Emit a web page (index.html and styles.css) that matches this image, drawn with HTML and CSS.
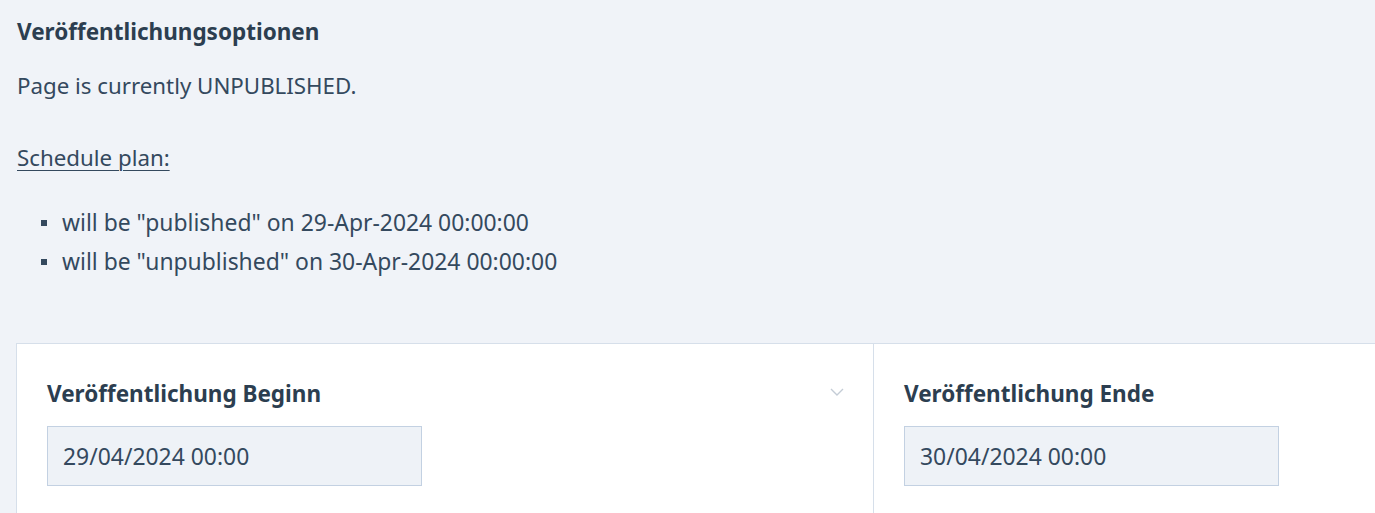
FILE: index.html
```html
<!DOCTYPE html>
<html lang="de">
<head>
<meta charset="utf-8">
<link rel="stylesheet" href="styles.css">
</head>
<body>
<div class="page">
  <h2 class="title">Veröffentlichungsoptionen</h2>
  <p class="status">Page is currently UNPUBLISHED.</p>
  <p class="plan"><u>Schedule plan:</u></p>
  <ul class="schedule">
    <li>will be "published" on 29-Apr-2024 00:00:00</li>
    <li>will be "unpublished" on 30-Apr-2024 00:00:00</li>
  </ul>
  <div class="card">
    <div class="col col-left">
      <div class="field">
        <label class="label">Veröffentlichung Beginn</label>
        <div class="input">29/04/2024 00:00</div>
      </div>
      <svg class="chevron" width="14" height="8" viewBox="0 0 14 8"><path d="M1 1 L7 7 L13 1" fill="none" stroke="#c4ccd6" stroke-width="1.4"/></svg>
    </div>
    <div class="col col-right">
      <div class="field">
        <label class="label">Veröffentlichung Ende</label>
        <div class="input">30/04/2024 00:00</div>
      </div>
    </div>
  </div>
</div>
</body>
</html>
```

FILE: styles.css
```css
html, body {
  margin: 0;
  padding: 0;
  background: #f0f3f8;
  overflow: hidden;
}
body {
  font-family: "Noto Sans", "Open Sans", sans-serif;
  color: #34495e;
}
.page {
  padding: 18px 0 0 16px;
}
.title {
  margin: 0;
  padding-left: 1px;
  font-size: 22.5px;
  font-weight: 700;
  line-height: 28px;
  color: #2c3e50;
}
.status {
  margin: 26px 0 0 1px;
  font-size: 22.3px;
  line-height: 28px;
}
.plan {
  margin: 44px 0 0 1px;
  font-size: 22.3px;
  line-height: 28px;
}
.plan u {
  text-underline-offset: 4px;
  text-decoration-thickness: 1px;
}
.schedule {
  margin: 31px 0 0 0;
  padding-left: 46px;
  list-style: none;
  font-size: 22.9px;
  line-height: 39px;
}
.schedule li {
  position: relative;
}
.schedule li::before {
  content: "";
  position: absolute;
  left: -21px;
  top: 17px;
  width: 6px;
  height: 6px;
  background: #34495e;
}
.card {
  margin-top: 62px;
  display: flex;
  background: #fff;
  border-top: 1px solid #d6dfea;
  border-left: 1px solid #d6dfea;
  height: 200px;
}
.col {
  display: flex;
  align-items: flex-start;
}
.col-left {
  width: 857px;
  border-right: 1px solid #d6dfea;
  padding: 36px 0 0 30px;
  box-sizing: border-box;
  justify-content: space-between;
}
.col-right {
  flex: 1;
  padding: 36px 0 0 30px;
}
.field {
  display: flex;
  flex-direction: column;
}
.label {
  font-size: 22.5px;
  font-weight: 700;
  line-height: 28px;
  color: #2c3e50;
}
.input {
  margin-top: 18px;
  width: 375px;
  height: 60px;
  box-sizing: border-box;
  background: #eef2f7;
  border: 1px solid #c3d1e2;
  padding: 0 15px;
  display: flex;
  align-items: center;
  font-size: 22.9px;
  color: #34495e;
}
.chevron {
  margin: 8px 29px 0 0;
}
```
